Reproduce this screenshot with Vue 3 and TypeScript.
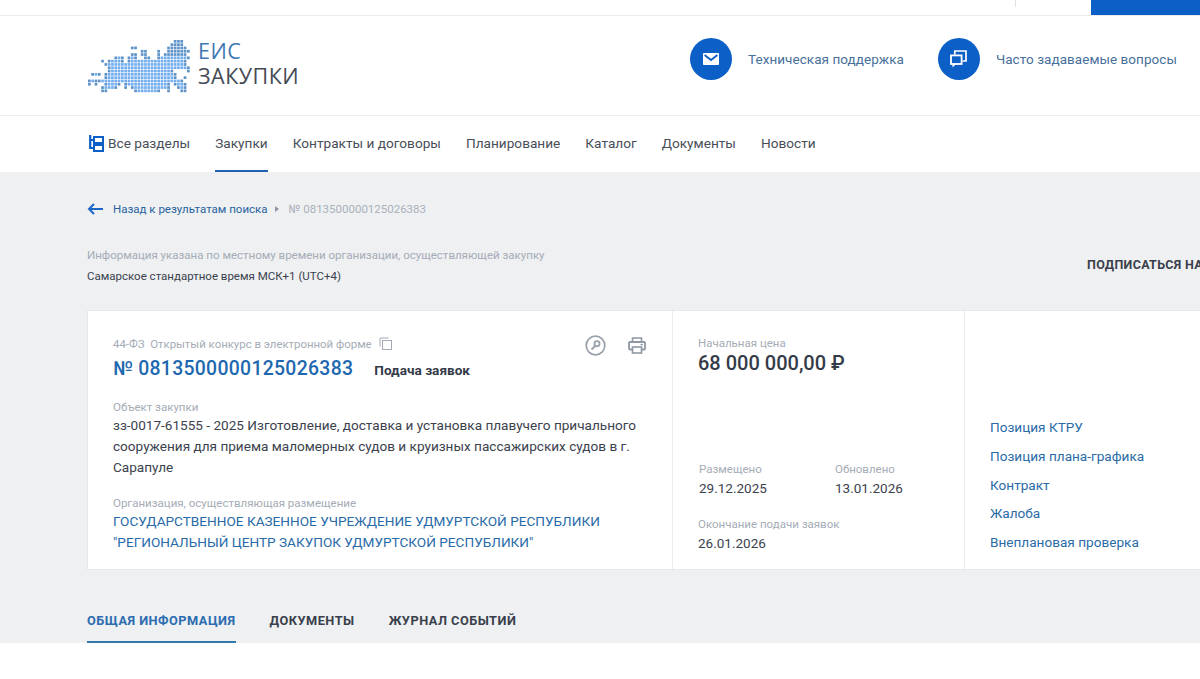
<script setup lang="ts">
const navItems = ["Закупки", "Контракты и договоры", "Планирование", "Каталог", "Документы", "Новости"];
const sideLinks = ["Позиция КТРУ", "Позиция плана-графика", "Контракт", "Жалоба", "Внеплановая проверка"];

// dotted map of the logo: [row, from col, to col]
const mapRuns: number[][] = [
	[0, 26, 28], [1, 25, 28], [2, 13, 14], [2, 24, 29], [3, 16, 17], [3, 21, 21], [3, 24, 30],
	[4, 13, 14], [4, 16, 17], [4, 21, 21], [4, 23, 29], [5, 8, 10], [5, 12, 14], [5, 17, 18], [5, 21, 30],
	[6, 4, 4], [6, 6, 10], [6, 12, 29], [7, 5, 29], [8, 6, 30], [9, 6, 25], [9, 30, 30], [10, 1, 3], [10, 5, 26],
	[11, 5, 26], [11, 29, 29], [12, 0, 2], [12, 3, 28], [13, 0, 0], [13, 2, 2], [13, 5, 9], [13, 11, 24], [13, 26, 29],
	[14, 4, 8], [14, 11, 11], [14, 13, 24], [14, 27, 29], [15, 4, 5], [15, 14, 21], [15, 24, 24], [15, 28, 29],
];
const mapDots: { x: number; y: number; dark: boolean }[] = [];
for (const [row, from, to] of mapRuns) {
	for (let c = from; c <= to; c++) {
		mapDots.push({ x: c * 3.3, y: row * 3.3, dark: c === from || c === to || row < 5 });
	}
}
</script>

<template>
	<div class="page">
		<div class="top-strip">
			<span class="strip-sep"></span>
			<span class="strip-btn"></span>
		</div>

		<header class="header">
			<div class="logo">
				<svg class="logo-map" width="104" height="54" viewBox="0 0 104 54">
					<rect v-for="(d, i) in mapDots" :key="i" :x="d.x" :y="d.y" width="2.7" height="2.7" :fill="d.dark ? '#5f93c8' : '#74aeee'" />
				</svg>
				<div class="logo-text">
					<span class="logo-eis">ЕИС</span>
					<span class="logo-zak">ЗАКУПКИ</span>
				</div>
			</div>
			<div class="header-links">
				<a class="head-link">
					<span class="circle">
						<svg width="16" height="12" viewBox="0 0 16 12">
							<rect width="16" height="12" rx="0.8" fill="#fff" />
							<path d="M1.6 2 L8 7 L14.4 2" fill="none" stroke="#0b5fc6" stroke-width="1.8" />
						</svg>
					</span>
					<span>Техническая поддержка</span>
				</a>
				<a class="head-link">
					<span class="circle">
						<svg width="17" height="18" viewBox="0 0 17 18">
							<path d="M4.8 4.5 V1 H16 V11 H12.5" fill="none" stroke="#fff" stroke-width="1.7" />
							<rect x="1" y="5.4" width="10.6" height="8.6" fill="none" stroke="#fff" stroke-width="1.8" />
							<path d="M2.5 14 V17.4 L6.2 14 Z" fill="#fff" />
						</svg>
					</span>
					<span>Часто задаваемые вопросы</span>
				</a>
			</div>
		</header>

		<nav class="nav">
			<a class="nav-item all">
				<svg width="15" height="17" viewBox="0 0 15 17">
					<path d="M1.2 0 V14" stroke="#0b5fc6" stroke-width="2.2" fill="none" />
					<path d="M1 5 H5 M1 13 H5" stroke="#0b5fc6" stroke-width="2" fill="none" />
					<rect x="5" y="2" width="9" height="6" fill="none" stroke="#0b5fc6" stroke-width="2" />
					<rect x="5" y="10" width="9" height="6" fill="none" stroke="#0b5fc6" stroke-width="2" />
				</svg>
				Все разделы
			</a>
			<a v-for="(item, i) in navItems" :key="item" class="nav-item" :class="{ active: i === 0 }">{{ item }}</a>
		</nav>

		<main class="main">
			<div class="crumbs">
				<svg width="16" height="12" viewBox="0 0 16 12">
					<path d="M16 6 H2 M7 1 L2 6 L7 11" fill="none" stroke="#1a68c4" stroke-width="2" />
				</svg>
				<a class="crumb-link">Назад к результатам поиска</a>
				<span class="crumb-arrow"></span>
				<span class="crumb-cur">№ 0813500000125026383</span>
			</div>

			<div class="tz-row">
				<div class="tz">
					<div class="tz-note">Информация указана по местному времени организации, осуществляющей закупку</div>
					<div class="tz-val">Самарское стандартное время МСК+1 (UTC+4)</div>
				</div>
				<div class="subscribe">ПОДПИСАТЬСЯ НА</div>
			</div>

			<section class="card">
				<div class="col col-main">
					<div class="col-top">
						<div class="law">
							44-ФЗ&nbsp; Открытый конкурс в электронной форме
							<svg class="copy" width="13" height="13" viewBox="0 0 13 13">
								<path d="M1 9.5 V1 H9.5" fill="none" stroke="#a4abb6" stroke-width="1" />
								<rect x="3.5" y="3.5" width="9" height="9" fill="none" stroke="#a4abb6" stroke-width="1" />
							</svg>
						</div>
						<div class="tools">
							<svg width="21" height="21" viewBox="0 0 21 21">
								<circle cx="10.5" cy="10.5" r="9.3" fill="none" stroke="#98a0ab" stroke-width="1.7" />
								<circle cx="12" cy="8.8" r="2.6" fill="none" stroke="#98a0ab" stroke-width="1.7" />
								<path d="M10 11 L6.5 14.5" stroke="#98a0ab" stroke-width="1.8" />
							</svg>
							<svg width="18" height="17" viewBox="0 0 18 17">
								<path d="M4.5 5 V1 H13.5 V5" fill="none" stroke="#8f98a4" stroke-width="1.6" />
								<rect x="1" y="5" width="16" height="7.5" rx="1" fill="none" stroke="#8f98a4" stroke-width="1.8" />
								<rect x="4.5" y="10" width="9" height="6" fill="#fff" stroke="#8f98a4" stroke-width="1.6" />
								<path d="M12.5 7.6 H14.8" stroke="#8f98a4" stroke-width="1.4" />
							</svg>
						</div>
					</div>
					<div class="num-row">
						<a class="num">№ 0813500000125026383</a>
						<span class="status">Подача заявок</span>
					</div>
					<div class="label obj-label">Объект закупки</div>
					<div class="obj">зз-0017-61555 - 2025 Изготовление, доставка и установка плавучего причального сооружения для приема маломерных судов и круизных пассажирских судов в г. Сарапуле</div>
					<div class="label org-label">Организация, осуществляющая размещение</div>
					<a class="org">ГОСУДАРСТВЕННОЕ КАЗЕННОЕ УЧРЕЖДЕНИЕ УДМУРТСКОЙ РЕСПУБЛИКИ "РЕГИОНАЛЬНЫЙ ЦЕНТР ЗАКУПОК УДМУРТСКОЙ РЕСПУБЛИКИ"</a>
				</div>

				<div class="col col-price">
					<div>
						<div class="label">Начальная цена</div>
						<div class="price">68 000 000,00 ₽</div>
					</div>
					<div>
						<div class="dates">
							<div>
								<div class="label">Размещено</div>
								<div class="date">29.12.2025</div>
							</div>
							<div>
								<div class="label">Обновлено</div>
								<div class="date">13.01.2026</div>
							</div>
						</div>
						<div class="deadline">
							<div class="label">Окончание подачи заявок</div>
							<div class="date">26.01.2026</div>
						</div>
					</div>
				</div>

				<div class="col col-links">
					<a v-for="link in sideLinks" :key="link" class="side-link">{{ link }}</a>
				</div>
			</section>

			<div class="tabs">
				<a class="tab active">ОБЩАЯ ИНФОРМАЦИЯ</a>
				<a class="tab">ДОКУМЕНТЫ</a>
				<a class="tab">ЖУРНАЛ СОБЫТИЙ</a>
			</div>
		</main>
	</div>
</template>

<style scoped>
.page {
	width: 1200px;
	height: 679px;
	overflow: hidden;
	background: #fff;
	font-family: Roboto, "Liberation Sans", sans-serif;
	color: #343b48;
}

.top-strip {
	height: 15px;
	border-bottom: 1px solid #e9ebee;
	display: flex;
	justify-content: flex-end;
}
.strip-sep {
	width: 1px;
	height: 7px;
	background: #dfe2e6;
	margin-right: 75px;
}
.strip-btn {
	width: 109px;
	height: 15px;
	background: #0b5fc6;
}

.header {
	height: 99px;
	border-bottom: 1px solid #eceef1;
	display: flex;
	align-items: center;
	justify-content: space-between;
	padding: 0 23px 0 88px;
}
.logo {
	display: flex;
	align-items: center;
	gap: 6px;
}
.logo-map {
	margin-top: 2px;
}
.logo-text {
	display: flex;
	flex-direction: column;
	font-family: "Open Sans", Lato, sans-serif;
	font-size: 21.5px;
	line-height: 25px;
	letter-spacing: 0.5px;
	margin-bottom: 6px;
}
.logo-eis {
	color: #3f79b3;
}
.logo-zak {
	color: #454b55;
}
.header-links {
	display: flex;
	gap: 34px;
	margin-bottom: 14px;
}
.head-link {
	display: flex;
	align-items: center;
	gap: 16px;
	font-size: 13.5px;
	color: #47709b;
	letter-spacing: 0.05px;
}
.circle {
	width: 42px;
	height: 42px;
	border-radius: 50%;
	background: #0b5fc6;
	display: flex;
	align-items: center;
	justify-content: center;
}

.nav {
	height: 56px;
	display: flex;
	padding-left: 89px;
	gap: 25px;
}
.nav-item {
	display: flex;
	align-items: center;
	gap: 4px;
	font-size: 13.65px;
	color: #484e59;
	border-bottom: 2px solid transparent;
	box-sizing: border-box;
}
.nav-item.active {
	border-bottom-color: #1f62b0;
}

.main {
	height: 442px;
	background: #eef0f2;
	padding: 29px 0 0 87px;
}
.crumbs {
	display: flex;
	align-items: center;
	font-size: 11.5px;
	height: 16px;
}
.crumb-link {
	color: #28639f;
	margin-left: 10px;
}
.crumb-arrow {
	width: 0;
	height: 0;
	border-left: 4px solid #8d95a0;
	border-top: 3px solid transparent;
	border-bottom: 3px solid transparent;
	margin: 0 10px 0 7px;
}
.crumb-cur {
	color: #a9b0ba;
}

.tz-row {
	display: flex;
	margin-top: 29px;
	height: 43px;
}
.tz {
	width: 1000px;
	flex: none;
	font-size: 11.5px;
}
.tz-note {
	color: #a5acb6;
	line-height: 18px;
}
.tz-val {
	color: #3b424e;
	line-height: 20px;
	margin-top: 2px;
}
.subscribe {
	flex: none;
	white-space: nowrap;
	font-size: 12.5px;
	font-weight: 700;
	letter-spacing: 0.3px;
	color: #3a404b;
	margin-top: 11px;
}

.card {
	margin-top: 21px;
	height: 258px;
	width: 1150px;
	background: #fff;
	border: 1px solid #e6e8ec;
	border-right: none;
	display: grid;
	grid-template-columns: 585px 292px 1fr;
}
.col {
	border-right: 1px solid #e9ebee;
}
.col-main {
	padding: 24px 20px 0 25px;
}
.col-top {
	display: flex;
	justify-content: space-between;
	align-items: flex-start;
	margin-right: 5px;
}
.law {
	font-size: 11.4px;
	line-height: 16px;
	color: #a5acb6;
	padding-top: 1px;
}
.copy {
	margin-left: 5px;
	vertical-align: -2px;
}
.tools {
	display: flex;
	gap: 22px;
	align-items: center;
	margin-right: 1px;
}
.num-row {
	display: flex;
	align-items: baseline;
	gap: 21px;
}
.num {
	font-size: 19.4px;
	font-weight: 500;
	color: #1e68b0;
	letter-spacing: 0.3px;
	line-height: 26px;
}
.status {
	font-size: 13.6px;
	font-weight: 700;
	color: #343b48;
}
.label {
	font-size: 11.5px;
	line-height: 16px;
	color: #a5acb6;
}
.obj-label {
	margin-top: 17px;
}
.obj {
	font-size: 13.58px;
	line-height: 21px;
	color: #3b424e;
}
.org-label {
	margin-top: 17px;
}
.org {
	display: block;
	font-size: 13.6px;
	line-height: 21px;
	color: #286aa8;
}

.col-price {
	padding: 24px 20px 16px 25px;
	display: flex;
	flex-direction: column;
	justify-content: space-between;
}
.price {
	font-size: 20px;
	font-weight: 500;
	color: #343b48;
	line-height: 24px;
}
.dates {
	display: grid;
	grid-template-columns: 136px 1fr;
	padding-left: 1px;
}
.date {
	font-size: 13.5px;
	line-height: 20px;
	color: #3b424e;
	margin-top: 1px;
}
.deadline {
	margin-top: 18px;
}

.col-links {
	border-right: none;
	padding: 106px 0 0 25px;
	display: flex;
	flex-direction: column;
	gap: 8.8px;
}
.side-link {
	font-size: 13.6px;
	line-height: 20px;
	color: #2a6ba8;
}

.tabs {
	display: flex;
	gap: 34px;
	margin-top: 34px;
	height: 39px;
}
.tab {
	font-size: 12.75px;
	font-weight: 700;
	letter-spacing: 0.5px;
	color: #3a404b;
	height: 39px;
	line-height: 34px;
	box-sizing: border-box;
}
.tab.active {
	color: #2c6cb0;
	border-bottom: 2px solid #2f7aa8;
}
</style>

<style>
html,
body {
	margin: 0;
	overflow: hidden;
}
a {
	text-decoration: none;
}
</style>
